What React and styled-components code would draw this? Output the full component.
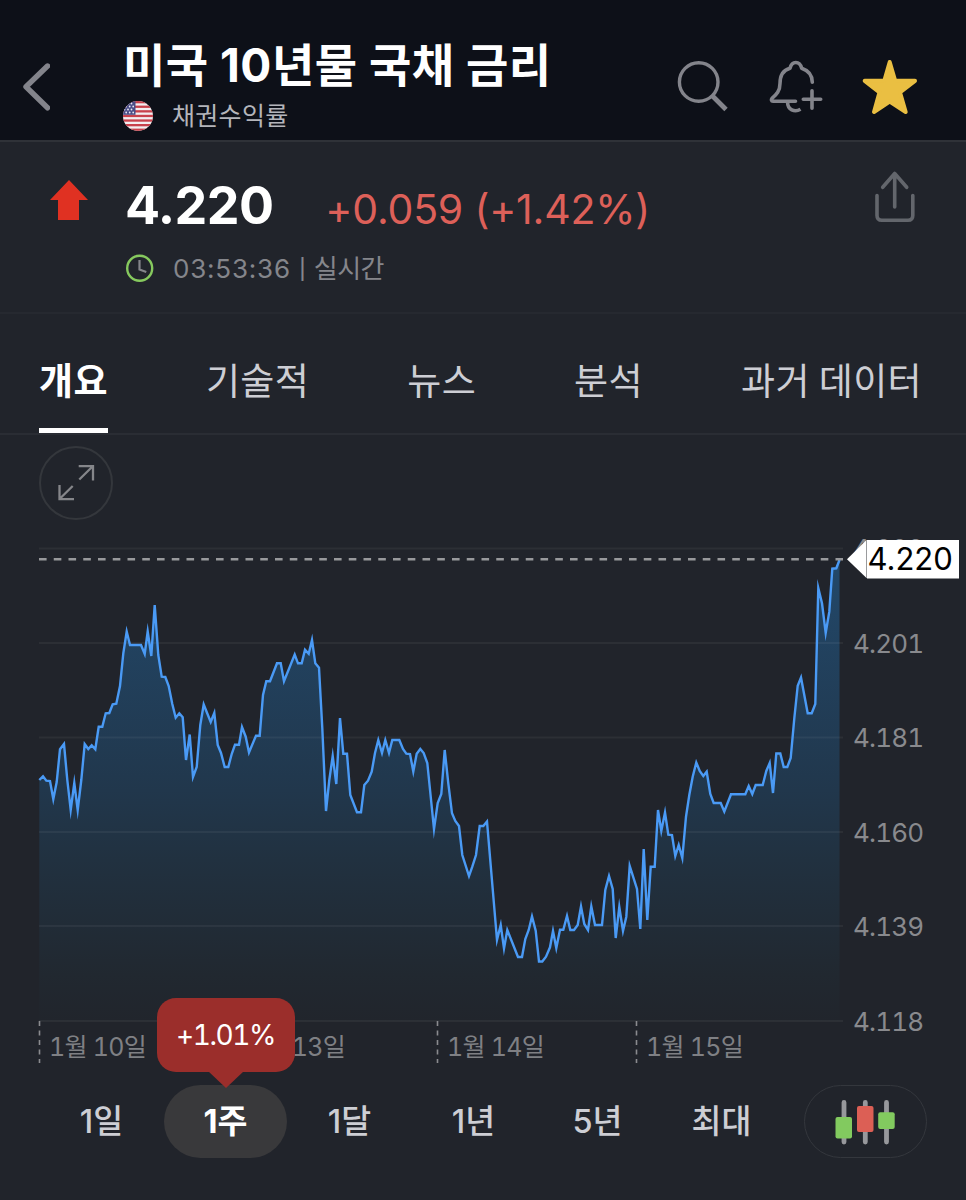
import React, { useState } from "react";
import styled, { createGlobalStyle, css } from "styled-components";

const GlobalStyle = createGlobalStyle`
  * {
    box-sizing: border-box;
  }

  body {
    margin: 0;
    background: #21242b;
    font-family: Inter, "Noto Sans CJK KR", sans-serif;
    -webkit-font-smoothing: antialiased;
  }

  button {
    padding: 0;
    border: 0;
    background: none;
    color: inherit;
    font: inherit;
    letter-spacing: inherit;
    cursor: pointer;
  }

  svg {
    display: block;
    flex: none;
  }
`;

const Screen = styled.div`
  width: 966px;
  height: 1200px;
  overflow: hidden;
  background: #21242b;
  color: #fff;
  white-space: nowrap;
`;

/* ---------- header ---------- */

const Header = styled.header`
  display: flex;
  align-items: flex-start;
  height: 142px;
  padding-left: 20px;
  background: #0d1018;
  border-bottom: 2px solid #2f3238;
`;

const BackButton = styled.button`
  margin: 60px 71px 0 0;
`;

const TitleBox = styled.div`
  flex: 1;
  padding: 35px 0 0 2px;
`;

const Title = styled.h1`
  margin: 0;
  font-size: 46px;
  font-weight: 700;
  line-height: 60px;
  letter-spacing: 0.5px;
`;

const SubTitle = styled.div`
  display: flex;
  align-items: center;
  gap: 19px;
  height: 42px;
  color: #b4b5bb;
  font-size: 25px;
  line-height: 42px;
  letter-spacing: 0.3px;
`;

const HeaderIcons = styled.div`
  display: flex;
  gap: 38px;
  margin: 56px 46px 0 0;
`;

/* ---------- quote ---------- */

const Quote = styled.section`
  display: flex;
  align-items: flex-start;
  height: 172px;
  padding-left: 50px;
  border-bottom: 2px solid #262930;
`;

const QuoteBody = styled.div`
  flex: 1;
  padding: 32px 0 0 37px;
`;

const PriceRow = styled.div`
  display: flex;
  align-items: baseline;
  gap: 52px;
  height: 64px;
  line-height: 64px;
`;

const Price = styled.span`
  font-size: 52px;
  font-weight: 700;
  letter-spacing: -0.6px;
`;

const Change = styled.span`
  color: #dd6059;
  font-size: 41px;
  letter-spacing: -0.2px;
`;

const TimeRow = styled.div`
  display: flex;
  align-items: center;
  gap: 18px;
  height: 36px;
  margin-top: 12px;
  color: #85868b;
  font-size: 26px;
  line-height: 36px;
`;

const TimeText = styled.div`
  display: flex;
  align-items: center;
  padding-top: 1px;
`;

const Time = styled.span`
  letter-spacing: 0.8px;
`;

const Bar = styled.span`
  margin: 0 8px;
  font-size: 20px;
  font-weight: 500;
`;

const Live = styled.span`
  letter-spacing: -0.6px;
`;

const ShareButton = styled.button`
  margin: 27px 49px 0 0;
`;

/* ---------- tabs ---------- */

const Tabs = styled.nav`
  display: flex;
  gap: 98px;
  height: 121px;
  padding: 0 39px;
  border-bottom: 2px solid #2a2d34;
`;

const Tab = styled.button`
  height: 119px;
  padding-top: 19px;
  border-bottom: 5px solid transparent;
  color: #cdced4;
  font-size: 37px;
  font-weight: 400;
  line-height: 98px;
  letter-spacing: 0.4px;
  word-spacing: -2px;

  ${(props) =>
    props.$active &&
    css`
      border-color: #fff;
      color: #fff;
      font-weight: 700;
    `}
`;

/* ---------- chart ---------- */

const ChartTools = styled.div`
  height: 85px;
  padding: 11px 39px 0;
`;

const ExpandButton = styled.button`
  display: grid;
  place-items: center;
  width: 74px;
  height: 74px;
  border: 2px solid #34373c;
  border-radius: 50%;
`;

const AxisText = styled.text`
  fill: #898a8e;
  font-size: 26px;
  font-variant-numeric: tabular-nums;
  letter-spacing: -0.8px;
`;

const DateText = styled.text`
  fill: #7f8084;
  font-size: 25px;
  font-variant-numeric: tabular-nums;
  letter-spacing: -0.7px;
`;

const FlagText = styled.text`
  fill: #000;
  font-size: 31px;
`;

/* ---------- periods ---------- */

const Periods = styled.div`
  display: flex;
  gap: 1px;
  padding-left: 40px;
`;

const Period = styled.button`
  position: relative;
  width: 123px;
  height: 73px;
  border-radius: 37px;
  background: ${(props) => (props.$active ? "#39393b" : "transparent")};
  color: ${(props) => (props.$active ? "#fff" : "#cdced4")};
  font-size: 32.5px;
  font-weight: ${(props) => (props.$active ? 700 : 500)};
  line-height: 73px;
`;

const Bubble = styled.span`
  position: absolute;
  bottom: 86px;
  left: 50%;
  width: 138px;
  height: 74px;
  border-radius: 19px;
  background: #9b2e2b;
  color: #fff;
  font-size: 28px;
  font-weight: 400;
  font-variant-numeric: tabular-nums;
  line-height: 75px;
  letter-spacing: -1.4px;
  transform: translateX(-50%);

  &::after {
    content: "";
    position: absolute;
    top: 100%;
    left: 50%;
    margin: -1px 0 0 -18px;
    border: 18px solid transparent;
    border-top: 17px solid #9b2e2b;
    border-bottom: 0;
  }
`;

const CandleButton = styled.button`
  display: grid;
  place-items: center;
  width: 123px;
  height: 73px;
  margin-left: 20px;
  border: 1.5px solid #34373d;
  border-radius: 37px;
`;

const tabs = ["개요", "기술적", "뉴스", "분석", "과거 데이터"];
const periods = ["1일", "1주", "1달", "1년", "5년", "최대"];

const gridLines = [
  { y: 548.5, label: "4.222" },
  { y: 643, label: "4.201" },
  { y: 737.5, label: "4.181" },
  { y: 832, label: "4.160" },
  { y: 926, label: "4.139" },
  { y: 1021, label: "4.118" },
];

const dates = [
  { x: 39.5, label: "1월 10일" },
  { x: 238.5, label: "1월 13일" },
  { x: 437.5, label: "1월 14일" },
  { x: 636.5, label: "1월 15일" },
];

const points = `
  39.3,780 43,776.3 46.3,780.7 50,781 53.3,799 56.7,782 60,749.3 64,744
  67.3,780 70.7,810 74.3,783 77.7,810 81.3,780 84.7,744 88.3,749 91.7,745.3
  95.3,749.3 98.7,726.7 102.3,726.7 105.7,713.3 109.3,713 112.7,704.3
  116.3,703.7 120,686 123.3,653.3 126.7,631.5 130,645 141,645 144.7,654
  147.7,631.5 151.3,656 154.7,605 158.3,655 161.7,676.7 165.3,677 168.7,686
  172.3,704 175.7,717.7 179.3,713.3 182.7,717.3 186,760 189.7,734.5 193,777
  196.7,767 200.3,725 203.7,704.5 210.7,722 214.3,713 217.7,745 221,753
  224.7,767 228.3,767 231.7,754 235,744.7 239,744.7 242,727 245.7,736.7
  249,752.5 256,735.7 259.7,735.7 263,695 266.3,681.3 270,681.3 277,663.3
  280.7,663.3 284,681.3 294.7,654.5 298,663.3 301.7,663.3 305,649.7
  308.7,653.7 312,640 315.3,663.3 319,667.7 322.3,728.3 326,811 329.3,780
  332.7,756 336.3,784 340,718 343.3,753.7 347,753.7 350.3,795 357,812.3
  361,812.3 364.3,785 368,780.7 371.7,771.7 375,753 378.3,740 382,753
  385.3,740 389,753 392.3,740 399.3,740 403,749 406.3,753.7 410,754
  413.3,771.5 416.7,753.7 420.3,749 423.7,753 427.3,763 434,829 437.7,803
  441.3,794 444.7,750 448.3,783.3 452,813.3 455.3,821 459,826 462.3,855
  469,876 472.3,866.7 476,855 479.7,826 483.3,826 487,821.5 497,940
  500.7,925 504,948.5 507.3,930 518,957 522,957 525.3,939 528.7,930 532,916.5
  535.7,930.7 539,961.5 542.3,961.5 546,956.7 550,947.3 553,931 556.3,948
  560,929.7 563.3,929.7 567,916 570.3,930 574,930 577.7,925 581,906.5
  584.3,924 588,930 591.3,906.5 595,925 602,925 605.3,890 609,876 612.7,889
  615.7,938 619.3,907 623,931 626.3,916.7 629.7,866 637,889 640.3,929
  643.7,849 647.3,920 650.7,866.7 654.7,866.7 658,810 661.3,831 665,812.5
  668.3,834.7 672,835 675.3,856 678.7,845 682.3,858 686,816.7 689.3,795
  692.7,776.7 696.3,762.5 699.7,771 703.3,776 706.7,771.7 710.3,794
  713.7,803 720.7,803 724.3,811.5 731,794.3 745.3,794.3 748.7,786
  752.3,794 755.7,785 762.7,785 766.3,771 769.7,763 773,793 776.3,753.5
  780.3,753.5 783.7,767 787.3,767 790.7,758 794.3,718.3 797.7,685.7
  801,677.5 807.7,713.3 811.7,713.3 815.3,704 818.3,588 822,603.3 825.7,633
  829.3,611.7 832.3,568.7 836.3,568.3 839.5,560`;

const UsFlag = () => (
  <svg width="30" height="30" viewBox="0 0 30 30">
    <clipPath id="flag">
      <circle cx="15" cy="15" r="15" />
    </clipPath>
    <g clipPath="url(#flag)">
      <rect width="30" height="30" fill="#f3eef0" />
      {[0, 4.6, 9.2, 13.8, 18.4, 23, 27.6].map((y) => (
        <rect key={y} y={y} width="30" height="2.3" fill="#c8414b" />
      ))}
      <rect width="12.5" height="13.8" fill="#4a4d86" />
      {[2.5, 5.5, 8.5, 11.5].map((y, row) =>
        [1.5, 5, 8.5].map((x) => (
          <circle
            key={x + "-" + y}
            cx={x + (row % 2) * 1.7}
            cy={y}
            r="0.9"
            fill="#e8e8f2"
          />
        ))
      )}
    </g>
  </svg>
);

const PriceChart = () => (
  <svg width="966" height="565" viewBox="0 520 966 565">
    <defs>
      <linearGradient
        id="area"
        gradientUnits="userSpaceOnUse"
        x1="0"
        y1="560"
        x2="0"
        y2="1021"
      >
        <stop offset="0" stopColor="#22486a" />
        <stop offset="0.5" stopColor="#21374c" />
        <stop offset="0.65" stopColor="#213140" />
        <stop offset="0.9" stopColor="#212830" />
        <stop offset="1" stopColor="#21252c" />
      </linearGradient>
    </defs>

    <polygon points={`39.3,1021 ${points} 839.5,1021`} fill="url(#area)" />
    {gridLines.map((it) => (
      <g key={it.label}>
        <line
          x1="39"
          x2="843"
          y1={it.y}
          y2={it.y}
          stroke="#fff"
          strokeOpacity="0.05"
          strokeWidth="2"
        />
        <AxisText x="853" y={it.y + 9.5}>
          {it.label}
        </AxisText>
      </g>
    ))}
    <polyline
      points={points}
      fill="none"
      stroke="#4a9af5"
      strokeWidth="2.4"
      strokeMiterlimit="9"
    />
    <line
      x1="39"
      x2="843"
      y1="559.3"
      y2="559.3"
      stroke="#98999c"
      strokeWidth="2.4"
      strokeDasharray="7.6 7.15"
    />

    {dates.map((it) => (
      <g key={it.label}>
        <line
          x1={it.x}
          x2={it.x}
          y1="1021"
          y2="1063"
          stroke="#8a8b8f"
          strokeWidth="1.6"
          strokeDasharray="5 4.5"
        />
        <DateText x={it.x + 9.5} y="1055.5">
          {it.label}
        </DateText>
      </g>
    ))}

    {/* current price */}
    <path d="M847 559.3 866.5 540V578Z" fill="#fff" />
    <rect x="867" y="540" width="92" height="38.5" fill="#fff" />
    <line x1="866.5" x2="866.5" y1="540" y2="578" stroke="#9a9b9d" />
    <FlagText x="867.5" y="570">
      4.220
    </FlagText>
  </svg>
);

const App = () => {
  const [tab, setTab] = useState("개요");
  const [period, setPeriod] = useState("1주");

  return (
    <Screen>
      <GlobalStyle />
      <Header>
        <BackButton>
          <svg width="30" height="54" viewBox="20 60 30 54" fill="none">
            <path
              d="M47.5 66 26 86.8 47.5 107.8"
              stroke="#83848b"
              strokeWidth="5.4"
              strokeLinecap="round"
              strokeLinejoin="round"
            />
          </svg>
        </BackButton>
        <TitleBox>
          <Title>미국 10년물 국채 금리</Title>
          <SubTitle>
            <UsFlag />
            채권수익률
          </SubTitle>
        </TitleBox>
        <HeaderIcons>
          <svg width="54" height="60" viewBox="677 56 54 60" fill="none" stroke="#83848b">
            <circle cx="698.7" cy="82" r="19.3" strokeWidth="3.4" />
            <path d="M712.5 96 726 109.5" strokeWidth="4.8" />
          </svg>
          <svg
            width="54"
            height="60"
            viewBox="769 56 54 60"
            fill="none"
            stroke="#83848b"
            strokeWidth="3.6"
            strokeLinecap="round"
            strokeLinejoin="round"
          >
            <path d="M795.5 101.3H773C771.3 101.3 771 99.6 772 98.4C776.5 94.5 780 91 780 83.5C780 75.5 783.5 70 790 68.2C791 64.5 793 62.5 795.8 62.5C798.6 62.5 800.7 64.5 801.7 68.2C808.5 70.5 812.3 75.5 812.3 82.3" />
            <path d="M787.6 102.5C787.6 109.5 794.5 112.8 800.5 109.3" strokeLinecap="butt" />
            <path d="M803.3 99.3H820.7M812 90.7V108.3" />
          </svg>
          <svg
            width="59"
            height="60"
            viewBox="861 56 59 60"
            fill="#eabf42"
            stroke="#eabf42"
            strokeWidth="4"
            strokeLinejoin="round"
          >
            <path d="M889.7 62 895.2 80.8H915L900 92.3 905.7 112 889.7 101.6 874 112 879.5 92.3 864.7 80.8H884.3Z" />
          </svg>
        </HeaderIcons>
      </Header>

      <Quote>
        <svg width="38" height="80" viewBox="50 142 38 80">
          <path d="M69 180 88 200H79V220H58V200H50Z" fill="#e03122" />
        </svg>
        <QuoteBody>
          <PriceRow>
            <Price>4.220</Price>
            <Change>+0.059 (+1.42%)</Change>
          </PriceRow>
          <TimeRow>
            <svg width="30" height="30" viewBox="125 253 30 30" fill="none">
              <circle cx="139.7" cy="268.3" r="12.5" stroke="#86c95e" strokeWidth="2.4" />
              <path d="M139.5 260V269.5L146.3 272" stroke="#85868b" strokeWidth="2.2" />
            </svg>
            <TimeText>
              <Time>03:53:36</Time>
              <Bar>|</Bar>
              <Live>실시간</Live>
            </TimeText>
          </TimeRow>
        </QuoteBody>
        <ShareButton>
          <svg
            width="44"
            height="56"
            viewBox="873 169 44 56"
            fill="none"
            stroke="#63666c"
            strokeWidth="3.6"
            strokeLinecap="round"
            strokeLinejoin="round"
          >
            <path d="M894.7 174V207M882.7 187.3 894.7 173.5 906.7 187.3" />
            <path d="M877 195.5V215.5Q877 220.3 881.8 220.3H908Q912.8 220.3 912.8 215.5V195.5" />
          </svg>
        </ShareButton>
      </Quote>

      <Tabs>
        {tabs.map((it) => (
          <Tab key={it} $active={it === tab} onClick={() => setTab(it)}>
            {it}
          </Tab>
        ))}
      </Tabs>

      <ChartTools>
        <ExpandButton>
          <svg
            width="38"
            height="38"
            viewBox="57 464 38 38"
            fill="none"
            stroke="#85868a"
            strokeWidth="2.3"
          >
            <path d="M79.3 479.5 93 466M78.7 466.2H93V480.5" />
            <path d="M72.7 486 59.5 499M59.5 485V499.2H74" />
          </svg>
        </ExpandButton>
      </ChartTools>
      <PriceChart />

      <Periods>
        {periods.map((it) => (
          <Period key={it} $active={it === period} onClick={() => setPeriod(it)}>
            {it}
            {it === period && <Bubble>+1.01%</Bubble>}
          </Period>
        ))}
        <CandleButton>
          <svg width="62" height="46" viewBox="835 1098 62 46">
            <g stroke="#97989c" strokeWidth="4.8" strokeLinecap="round">
              <path d="M844 1101.5V1141M865.3 1101.5V1141M886.5 1101.5V1141" />
            </g>
            <rect x="835.5" y="1116" width="16.5" height="21.5" rx="2" fill="#82ca5f" />
            <rect x="857" y="1105" width="16.5" height="26" rx="2" fill="#dc5f55" />
            <rect x="878.2" y="1111.3" width="16.5" height="16.7" rx="2" fill="#82ca5f" />
          </svg>
        </CandleButton>
      </Periods>
    </Screen>
  );
};

export default App;
